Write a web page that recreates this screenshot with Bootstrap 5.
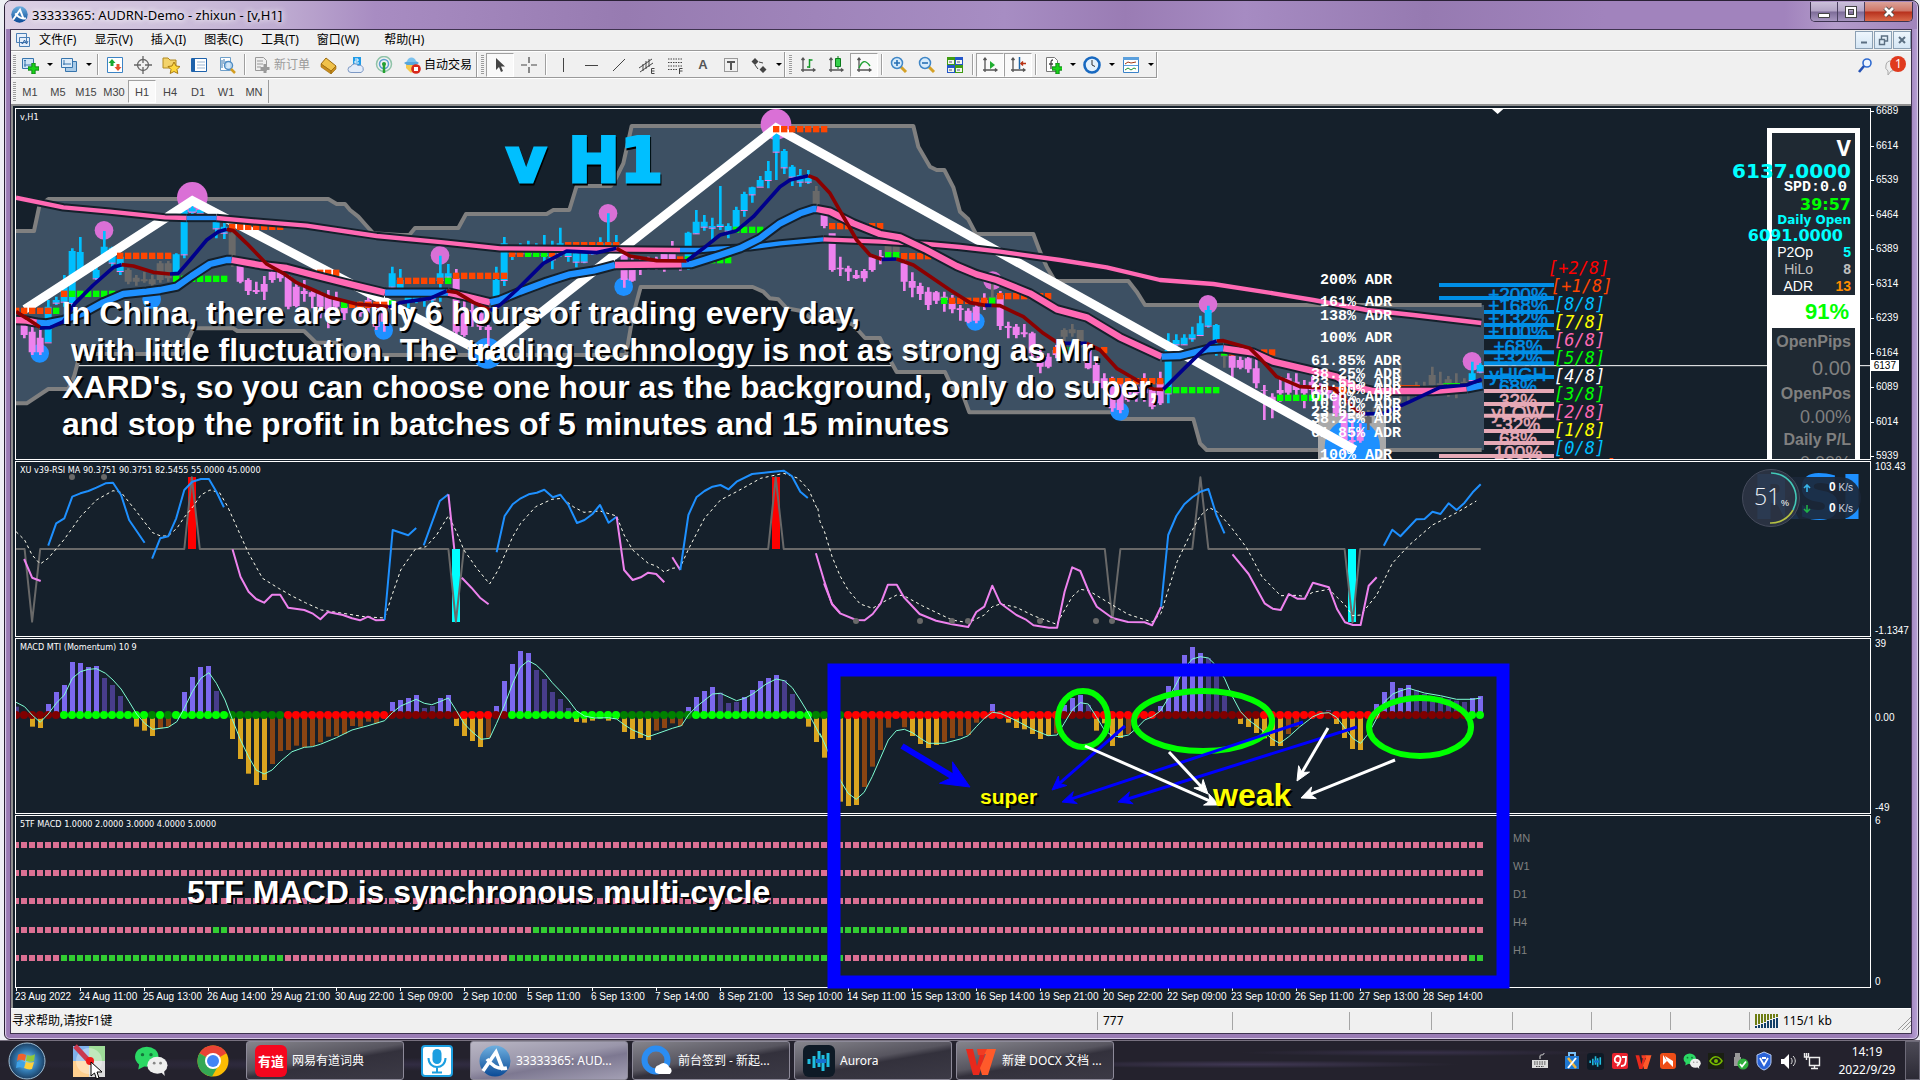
<!DOCTYPE html>
<html lang="zh-CN">
<head>
<meta charset="utf-8">
<meta name="viewport" content="width=device-width, initial-scale=1">
<title>33333365: AUDRN-Demo - zhixun - [v,H1]</title>
<link href="https://cdn.jsdelivr.net/npm/bootstrap@5.3.0/dist/css/bootstrap.min.css" rel="stylesheet">
<style>
:root{--ink:#15202b;--line:#fff}
body{background:#eef0f4;font-family:"Noto Sans","Noto Sans CJK SC",sans-serif;font-size:12px;line-height:16px;color:#000;overflow-x:hidden}
button{border:0;background:none;padding:0;color:inherit;font:inherit}
.app-window{margin:0 1px 0 4px;border:1px solid #2a2136;border-radius:7px 7px 6px 6px;padding:0 6px 5px 5px;
 background:linear-gradient(90deg,#b7a2cd 0,#9a7cb5 2px,#9a7cb5 99.5%,#b9a3d8);box-shadow:inset 0 0 0 1px #d8cbe6}
.caption-bar{height:28px;margin:0 -5px;padding-left:6px;padding-top:1px;border-radius:6px 6px 0 0;
 background:linear-gradient(90deg,#dcd0e4 0,#cdbfdb 170px,#c0add2 270px,#a88cc2 370px,#977bb1 620px,#a78dc3 1000px,#9a7cb4 1120px,#a68bc2 1240px,#967ab1 1420px,#a183bd 1600px,#a183bd 1780px,#b49ccb 1830px,#a185bc)}
.caption-text{font-size:13px;line-height:26px;text-shadow:0 0 6px #fff,0 0 6px #fff}
.win-ctl{height:20px;border:1px solid #3d3450;border-top:0;border-radius:0 0 5px 5px;overflow:hidden;margin-right:4px}
.win-ctl button{width:27px;background:linear-gradient(#cbc0da 0,#b3a4c6 48%,#7d6c98 52%,#a796c0);border-right:1px solid #4a4060}
.win-ctl button:last-child{width:47px;border:0;background:linear-gradient(#dba299 0,#cf7566 48%,#b7301c 52%,#d9694a)}
.client{border:1px solid #3f3350;background:#f0f0f0}
.menu-row{height:22px;border-bottom:1px solid #fff;box-shadow:inset 0 -1px #9a9a9a;padding-bottom:1px}
.menu-row a{color:#000;text-decoration:none;padding:0 9px;line-height:20px}
.mdi button{width:18px;height:18px;border:1px solid #8ba0b4;background:linear-gradient(#eef6fd,#d5e6f5);margin-left:1px}
.tool-row{height:27px}
.time-row{height:25px}
.tool-set{border-right:1px solid #9a9a9a;border-bottom:1px solid #9a9a9a;box-shadow:1px 1px #fff;height:26px}
.grip-bar{width:3px;height:19px;margin:0 2px;background:repeating-linear-gradient(#9b9b9b 0 1px,#f6f6f6 1px 2px)}
.tool{width:28px;height:24px}
.tool svg,.tool-text svg{width:18px;height:18px}
.tool.pressed,.tf.pressed{background:#f9f9f9;border:1px solid #a0a0a0;border-right-color:#fff;border-bottom-color:#fff}
.tool-text{height:24px;padding:0 4px 0 5px;gap:3px}
.caret-btn{width:11px;height:24px}
.caret-btn::before{content:"";display:block;margin:auto;width:5px;border:3px solid transparent;border-top-color:#000;border-bottom:0}
.rule{width:1px;height:21px;background:#9f9f9f;box-shadow:1px 0 #fff;margin:0 3px}
.tf{width:28px;height:23px;font:11px "Liberation Sans",sans-serif;color:#444}
.chart-frame{position:relative;border:solid #8f8f8f;border-width:2px 0 0 2px;padding:2px 0 0 2px;background:var(--ink);color:#fff;font:10px/12px "Liberation Sans",sans-serif}
.pane{display:flex;margin-bottom:1px}
.plot{flex:1 1 0;min-width:0;border:1px solid var(--line);position:relative;overflow:hidden}
.plot>svg{display:block;width:100%}
.plot-name{position:absolute;left:4px;top:2px;font:9px/12px "DejaVu Sans Condensed","Liberation Sans",sans-serif}
.scale{width:40px;flex:none;padding-left:5px;position:relative;display:flex;flex-direction:column;justify-content:space-between}
.scale span{position:relative}
.scale.price{margin:-3px 0 -2px}
.scale.price span::before{content:"";position:absolute;left:-5px;top:6px;width:3px;height:1px;background:#fff}
.price-tag{position:absolute;right:12px;top:255px;background:#fff;color:#000;line-height:11px;padding:0 3px}
.dates{height:20px;display:flex;padding-top:3px}
.dates span{width:64px;flex:none;white-space:nowrap;position:relative}
.dates span::before{content:"";position:absolute;left:1px;top:-4px;width:1px;height:4px;background:#fff}
.overlay{position:absolute;left:0;top:0;width:100%;height:100%;pointer-events:none}
.info{position:absolute;right:10px;top:19px;width:93px;height:340px;border:5px solid #fff;background:#1f2933;text-align:right;white-space:nowrap;padding:4px 4px 0 0}
.info>div{display:flex;justify-content:flex-end}
.wide{font-family:"DejaVu Sans",sans-serif;font-weight:700;color:#0ff}
.mono{font-family:"Liberation Mono",monospace;font-weight:700}
.info .pct{background:#fff;color:#0f0;font-size:22px;font-weight:700;line-height:33px;height:33px;margin-right:-4px;padding-right:6px}
.info .dim{color:#808080}
.speed{position:absolute;right:9px;top:7px}
.dial{width:58px;height:58px;z-index:1}
.rates{height:42px;width:76px;margin-left:-15px;border-radius:0 21px 21px 0;background:#1c2738e8;padding-left:18px;padding-right:8px;color:#cfd6e0}
.rates div{height:21px;line-height:21px;font-size:10px}
.rates b{font-size:12px;color:#fff}
.status{height:25px;border-top:1px solid #fff;line-height:24px}
.status>div{padding-left:1px}
.status span{border-left:1px solid #a5a5a5;height:18px;line-height:18px;margin-top:3px;padding-left:5px;flex:none}
.taskbar{height:40px;border-top:1px solid #77717f;color:#fff;font-size:12px;
 background:radial-gradient(ellipse at 65% 60%,#54476f99,transparent 12%),radial-gradient(ellipse at 74% 30%,#4b3f6680,transparent 9%),radial-gradient(ellipse at 20% 60%,#40385a80,transparent 20%),#24222d}
.task{width:158px;height:39px;border:1px solid #8d8a99;border-radius:3px;padding-left:8px;gap:5px;margin-right:4px;background:linear-gradient(170deg,#85848c,#57555f 45%,#33313c 55%,#3c3a46);color:#fff;text-align:left;white-space:nowrap}
.task.active{background:linear-gradient(170deg,#b9b6c4,#9a96aa 45%,#7d7891 60%,#a39fb4)}
.task svg{width:32px;height:32px;flex:none}
.quick{height:39px}
.quick svg{display:block}
.tray svg{width:18px;height:20px;display:block}
.tray{gap:6px}
.clock{width:60px;text-align:center;line-height:18px}
.desk-btn{width:15px;height:39px;border:1px solid #6d6a78;background:linear-gradient(#4c4a56,#2c2a35)}
</style>
<script src="https://cdn.jsdelivr.net/npm/bootstrap@5.3.0/dist/js/bootstrap.bundle.min.js"></script>
</head>
<body class="d-flex flex-column min-vh-100">
<svg width="0" height="0" class="position-absolute" aria-hidden="true">
<defs>
<linearGradient id="gLogo" x2="0" y2="1"><stop stop-color="#6fb0e0"/><stop offset="1" stop-color="#0a4a96"/></linearGradient>
<radialGradient id="gOrb"><stop stop-color="#8fd4f4"/><stop offset=".6" stop-color="#3177ae"/><stop offset="1" stop-color="#1c3f63"/></radialGradient>
<symbol id="plus" viewBox="0 0 10 10"><path d="M3.500 0h3v3.500H10v3H6.500V10h-3V6.500H0v-3h3.500z" fill="#19d219" stroke="#0a7a12" stroke-width=".8"/></symbol>
<symbol id="logo" viewBox="0 0 32 32"><circle cx="16" cy="16" r="15.500" fill="url(#gLogo)"/><path d="M4 26 17 7l7 18M8 14c6 8 12 11 20 9" fill="none" stroke="#fff" stroke-width="3.600"/></symbol>
<symbol id="axes" viewBox="0 0 18 18"><path d="M4 2v14M2 14h14M2.500 4 4 2l1.500 2M14 12.500l2 1.500-2 1.500" fill="none" stroke="#555" stroke-width="1.300"/></symbol>
<symbol id="wechat" viewBox="0 0 32 32"><ellipse cx="12" cy="12" rx="11" ry="9.500" fill="#2bd864"/><path d="m5 18-1 6 6-3z" fill="#2bd864"/><ellipse cx="22" cy="20" rx="9.500" ry="8" fill="#eee"/><path d="m25 26 4 4-1-6z" fill="#eee"/><g fill="#14753a"><circle cx="8" cy="10" r="1.600"/><circle cx="16" cy="10" r="1.600"/></g><g fill="#888"><circle cx="19" cy="18" r="1.300"/><circle cx="25" cy="18" r="1.300"/></g></symbol>
<symbol id="wps" viewBox="0 0 32 32"><path d="M1 4h7l4 17 3-12h5l-6 21H8z" fill="#e8291c"/><path d="M20 4h11l-8 26h-6l-2-7 6-14h-3z" fill="#ff5a2a"/><path d="M12 4h10l-3 6h-6z" fill="#f03c22"/></symbol>
<symbol id="aurora" viewBox="0 0 32 32"><rect width="32" height="32" rx="6" fill="#0e1a26"/><path d="M6 14v5M11 11v12M16 6v16M20 10v16M25 8v14" stroke="#20bfe0" stroke-width="3"/><path d="M13 16h10" stroke="#1570d0" stroke-width="4"/></symbol>
</defs></svg>

<main class="app-window">
<header class="caption-bar d-flex align-items-start">
 <svg width="17" height="17" class="mt-1 me-1"><use href="#logo"/></svg>
 <div class="caption-text flex-grow-1">33333365: AUDRN-Demo - zhixun - [v,H1]</div>
 <div class="win-ctl d-flex">
  <button aria-label="最小化"><svg width="14" height="14"><path d="M1.500 8.500h11v4h-11z" fill="#fff" stroke="#444"/></svg></button>
  <button aria-label="最大化"><svg width="14" height="14"><path d="M3 3h8v8H3z" fill="none" stroke="#444" stroke-width="4"/><path d="M3 3h8v8H3z" fill="none" stroke="#fff" stroke-width="2"/></svg></button>
  <button aria-label="关闭"><svg width="14" height="14"><path d="m3 3 8 8m0-8-8 8" stroke="#444" stroke-width="4.500"/><path d="m3 3 8 8m0-8-8 8" stroke="#fff" stroke-width="2.800"/></svg></button>
 </div>
</header>
<div class="client">
<nav class="menu-row d-flex align-items-center">
 <svg width="16" height="16" class="ms-1"><path d="M1.500 1.500h10v9h-10zM4.500 5.500h10v9h-10z" fill="#e5effa" stroke="#4a7fb5"/><path d="m6 10 1.500 2 2-4 2 4 1.500-3" fill="none" stroke="#2c62a0"/></svg>
 <a href="#" class="ps-2">文件(F)</a><a href="#">显示(V)</a><a href="#">插入(I)</a><a href="#">图表(C)</a><a href="#">工具(T)</a><a href="#">窗口(W)</a><a href="#" class="ps-3">帮助(H)</a>
 <div class="mdi d-flex ms-auto">
  <button aria-label="最小化图表"><svg width="12" height="12" class="d-block mx-auto"><path d="M3 8.500h6" stroke="#5b6f82" stroke-width="2"/></svg></button>
  <button aria-label="还原图表"><svg width="12" height="12" class="d-block mx-auto"><path d="M4.500 5V2h6v5H8M2.500 5.500h5v5h-5z" fill="none" stroke="#5b6f82" stroke-width="1.400"/></svg></button>
  <button aria-label="关闭图表"><svg width="12" height="12" class="d-block mx-auto"><path d="m3 3 6 6m0-6-6 6" stroke="#5b6f82" stroke-width="2"/></svg></button>
 </div>
</nav>
<div class="tool-row d-flex align-items-start">
 <div class="tool-set d-flex align-items-center">
  <i class="grip-bar me-0"></i>
  <button class="tool" aria-label="新图表"><svg viewBox="0 0 18 18"><path d="M1.500 2.500h11v10h-11z" fill="#cfe4f7" stroke="#3775ad"/><path d="M4 4v7M3 5l1-1 1 1M3 9h8" fill="none" stroke="#3775ad"/><use href="#plus" x="7" y="7" width="11" height="11"/></svg></button><button class="caret-btn" aria-label="新图表选项"></button>
  <button class="tool" aria-label="配置文件"><svg viewBox="0 0 18 18"><path d="M5.500 5.500h11v10h-11z" fill="#a9cbe8" stroke="#3775ad"/><path d="M1.500 2.500h11v9h-11z" fill="#ddecf9" stroke="#3775ad"/><path d="M3 8h8M4 4v5" stroke="#3775ad"/></svg></button><button class="caret-btn" aria-label="配置文件选项"></button>
  <i class="rule"></i>
  <button class="tool" aria-label="市场报价"><svg viewBox="0 0 18 18"><path d="M1.500 1.500h15v15h-15z" fill="#fff" stroke="#3c83c4"/><path d="m6 3 3.500 4H7.500v3h-3V7H2.500z" fill="#18a832"/><path d="m12 15 3.500-4h-2V8h-3v3h-2z" fill="#e5502c"/></svg></button>
  <button class="tool" aria-label="数据窗口"><svg viewBox="0 0 18 18"><circle cx="9" cy="9" r="5.500" fill="none" stroke="#666" stroke-width="1.300"/><path d="M9 0v7M9 11v7M0 9h7M11 9h7" stroke="#666" stroke-width="1.300"/></svg></button>
  <button class="tool" aria-label="导航"><svg viewBox="0 0 18 18"><path d="M1 2h5l2 2h6v8H1z" fill="#f3d36b" stroke="#b28a21"/><path d="m12 6 2 4 4 .5-3 3 .8 4-3.800-2-3.800 2 .8-4-3-3 4-.5z" fill="#ffd83c" stroke="#a87a10"/></svg></button>
  <button class="tool" aria-label="终端"><svg viewBox="0 0 18 18"><path d="M1.500 2.500h15v13h-15z" fill="#fff" stroke="#1e62ab"/><path d="M2 3h3v12H2z" fill="#1e62ab"/><path d="M7 6h8M7 9h8M7 12h8" stroke="#9db7d2"/></svg></button>
  <button class="tool" aria-label="策略测试"><svg viewBox="0 0 18 18"><path d="M2.500 1.500h10v13h-10z" fill="#fff" stroke="#6e9fc9"/><path d="M4 4v8M6 3v5M8 5v6" stroke="#3775ad"/><circle cx="10.500" cy="9.500" r="4" fill="#c8e2f8cc" stroke="#4e8cc4" stroke-width="1.500"/><path d="m13 13 4 4" stroke="#d39d20" stroke-width="2.500"/></svg></button>
  <i class="rule"></i>
  <button class="tool-text d-flex align-items-center" style="color:#9a9a9a"><svg viewBox="0 0 18 18"><path d="M2.500 1.500h8l3 3v10h-11z" fill="#eee" stroke="#999"/><path d="M4 5h6M4 8h6M4 11h4" stroke="#999"/><path d="M12 8v9M7.500 12.500h9" stroke="#999" stroke-width="3"/></svg>新订单</button>
  <button class="tool" aria-label="编辑器"><svg viewBox="0 0 18 18"><path d="m7 2 10 8-5 5L2 8z" fill="#f0c24a" stroke="#9b6a0e"/><path d="M2 8v3l10 7v-3zM12 18l5-5v-3l-5 5z" fill="#c98d1c" stroke="#9b6a0e" stroke-width=".6"/></svg></button>
  <button class="tool" aria-label="云服务"><svg viewBox="0 0 18 18"><path d="M6 1h8v9H6z" fill="#1f9be8"/><path d="M8 3h3v2H8v2h4" fill="none" stroke="#fff"/><path d="M4 16.500a3 3 0 0 1 0-6 4 4 0 0 1 7-1 3.500 3.500 0 0 1 3 7z" fill="#e4ecf8" stroke="#7c98c4"/></svg></button>
  <button class="tool" aria-label="信号"><svg viewBox="0 0 18 18" fill="none"><circle cx="9" cy="8" r="7.500" stroke="#8fc3a8" stroke-width="1.500"/><circle cx="9" cy="8" r="4.500" stroke="#5d9fd0" stroke-width="1.500"/><path d="M9 7v10" stroke="#24a031" stroke-width="2.500"/><circle cx="9" cy="8" r="2" fill="#24a031"/></svg></button>
  <button class="tool-text d-flex align-items-center"><svg viewBox="0 0 18 18"><path d="M3 8h10v4l-5 5-5-5z" fill="#f5c94f"/><path d="M1 7c4-3 12-3 15 0l-3 2H4z" fill="#56a5dc"/><path d="M4 6c0-6 9-6 9 0z" fill="#7cc2ee"/><circle cx="13" cy="13" r="4.800" fill="#d8281b"/><path d="M11 11h4v4h-4z" fill="#fff"/></svg>自动交易</button>
 </div>
 <div class="tool-set d-flex align-items-center">
  <i class="grip-bar ms-1"></i>
  <button class="tool pressed" aria-label="光标"><svg viewBox="0 0 18 18"><path d="M5 2v12l3-3 2 5 2-1-2-4.500h4z" fill="#444"/></svg></button>
  <button class="tool" aria-label="十字准线"><svg viewBox="0 0 18 18"><path d="M10 1v6M10 11v6M2 9h6M12 9h6" stroke="#444" stroke-width="1.200"/></svg></button>
  <i class="rule"></i>
  <button class="tool" aria-label="垂直线"><svg viewBox="0 0 18 18"><path d="M9.500 2v14" stroke="#444"/></svg></button>
  <button class="tool" aria-label="水平线"><svg viewBox="0 0 18 18"><path d="M3 9.500h13" stroke="#444"/></svg></button>
  <button class="tool" aria-label="趋势线"><svg viewBox="0 0 18 18"><path d="M3 15 15 3" stroke="#444"/></svg></button>
  <button class="tool" aria-label="等距通道"><svg viewBox="0 0 18 18"><path d="M1 12 14 3M2 16 15 7M5 8v7M8 5v8M11 3v8" stroke="#444"/><path d="M16.500 12.500h-3v5h3M13.500 15h3" fill="none" stroke="#444"/></svg></button>
  <button class="tool" aria-label="斐波那契"><svg viewBox="0 0 18 18"><path d="M2 3h14M2 6.500h14M2 10h14M2 13.500h9" stroke="#444" stroke-dasharray="1.500 1"/><path d="M16.500 12.500h-3V18M13.500 15h3" fill="none" stroke="#444"/></svg></button>
  <button class="tool" aria-label="文字"><b style="color:#555;font:bold 13px 'Liberation Sans',sans-serif">A</b></button>
  <button class="tool" aria-label="文字标签"><svg viewBox="0 0 18 18"><path d="M2.500 2.500h13v13h-13z" fill="none" stroke="#444" stroke-dasharray="1 1"/><path d="M5 6h8M9 6v8" stroke="#555" stroke-width="2"/></svg></button>
  <button class="tool" aria-label="箭头"><svg viewBox="0 0 18 18"><path d="m5 2 3.500 3.500L5 9 1.500 5.500zM13 10l3.500 3.500L13 17l-3.500-3.500z" fill="#444"/><path d="m5 9 3 4M9 6l4 1" stroke="#444"/></svg></button><button class="caret-btn" aria-label="箭头选项"></button>
 </div>
 <div class="tool-set d-flex align-items-center">
  <i class="grip-bar ms-1"></i>
  <button class="tool" aria-label="柱状图"><svg viewBox="0 0 18 18"><use href="#axes"/><path d="M10.500 3v9M10.500 4h3M8 11h2.500" stroke="#159a28" stroke-width="1.500"/></svg></button>
  <button class="tool" aria-label="蜡烛图"><svg viewBox="0 0 18 18"><use href="#axes"/><path d="M11 0v13" stroke="#0b7a1b"/><path d="M8.500 2.500h5v8h-5z" fill="#35d04a" stroke="#0b7a1b"/></svg></button>
  <button class="tool pressed" aria-label="折线图"><svg viewBox="0 0 18 18"><use href="#axes"/><path d="M4 12c3-7 6-9 11-2" fill="none" stroke="#22a336" stroke-width="1.400"/></svg></button>
  <i class="rule"></i>
  <button class="tool" aria-label="放大"><svg viewBox="0 0 18 18"><path d="m10 10 6 6" stroke="#d5a126" stroke-width="3"/><circle cx="7" cy="7" r="5.500" fill="#d6ebfb" stroke="#3f86c6" stroke-width="1.500"/><path d="M4 7h6M7 4v6" stroke="#2770b4" stroke-width="1.600"/></svg></button>
  <button class="tool" aria-label="缩小"><svg viewBox="0 0 18 18"><path d="m10 10 6 6" stroke="#d5a126" stroke-width="3"/><circle cx="7" cy="7" r="5.500" fill="#d6ebfb" stroke="#3f86c6" stroke-width="1.500"/><path d="M4 7h6" stroke="#2770b4" stroke-width="1.600"/></svg></button>
  <button class="tool" aria-label="平铺窗口"><svg viewBox="0 0 18 18"><path d="M1 1h8v8H1zM9 9h8v8H9z" fill="#3f9c12"/><path d="M9 1h8v8H9zM1 9h8v8H1z" fill="#2356c9"/><path d="M2 4h6v4H2zM10 4h6v4h-6zM2 12h6v4H2zM10 12h6v4h-6z" fill="#f2f6ee"/><path d="M3 6h3M11 6h3M3 14h3M11 14h3" stroke="#557"/></svg></button>
  <i class="rule"></i>
  <button class="tool pressed" aria-label="自动滚动"><svg viewBox="0 0 18 18"><use href="#axes"/><path d="m9 5 5 4-5 4z" fill="#1fae31"/></svg></button>
  <button class="tool pressed" aria-label="图表平移"><svg viewBox="0 0 18 18"><use href="#axes"/><path d="M10.500 1v12" stroke="#1c66a8" stroke-width="1.500"/><path d="M17 7.500h-5m2-2-2 2 2 2" fill="none" stroke="#b83213" stroke-width="1.500"/></svg></button>
  <i class="rule"></i>
  <button class="tool" aria-label="技术指标"><svg viewBox="0 0 18 18"><path d="M2.500 1.500h8l3 3v11h-11z" fill="#fff" stroke="#777"/><path d="M9 4C7 4 7 5 7 7v6M5 8h4" fill="none" stroke="#444" stroke-width="1.300"/><use href="#plus" x="8" y="7" width="11" height="11"/></svg></button><button class="caret-btn" aria-label="技术指标选项"></button>
  <button class="tool" aria-label="时间周期"><svg viewBox="0 0 18 18"><circle cx="9" cy="9" r="7.500" fill="#e4f1fc" stroke="#1869c0" stroke-width="2.600"/><path d="M9 4v5l3 1.500" fill="none" stroke="#333"/></svg></button><button class="caret-btn" aria-label="时间周期选项"></button>
  <button class="tool" aria-label="模板"><svg viewBox="0 0 18 18"><path d="M1.500 1.500h15v15h-15z" fill="#fff" stroke="#3b83c8"/><path d="M1 1h16v3H1zM2 9h14v1H2z" fill="#5ba0dd"/><path d="m3 8 3-2 3 1 5-1" fill="none" stroke="#a33a14"/><path d="m3 14 3-2 3 2 3-2 2 1" fill="none" stroke="#1b9430"/></svg></button><button class="caret-btn" aria-label="模板选项"></button>
 </div>
 <div class="ms-auto d-flex align-items-center pe-1 pt-1">
  <button class="me-2" aria-label="搜索"><svg width="20" height="18"><circle cx="12" cy="6" r="4" fill="#eef5ff" stroke="#2f6bd0" stroke-width="1.600"/><path d="m9 9-5 6" stroke="#2452b5" stroke-width="2.600"/></svg></button>
  <button aria-label="消息"><svg width="24" height="20"><path d="M3 9a5 5 0 1 1 5 6l-3 4v-4a5 5 0 0 1-2-6" fill="#eee" stroke="#aaa"/><circle cx="15" cy="8" r="8" fill="#e03a1e"/><text x="12" y="12" font-size="12" fill="#fff">1</text></svg></button>
 </div>
</div>
<div class="time-row d-flex align-items-center">
 <div class="d-flex align-items-center" style="border-right:1px solid #9a9a9a">
 <i class="grip-bar me-0"></i>
 <button class="tf">M1</button><button class="tf">M5</button><button class="tf">M15</button><button class="tf">M30</button><button class="tf pressed">H1</button><button class="tf">H4</button><button class="tf">D1</button><button class="tf">W1</button><button class="tf">MN</button></div>
</div>

<section class="chart-frame">
 <div class="pane">
  <div class="plot"><svg id="price" height="350"></svg><div class="plot-name">v,H1</div>
   <div class="info">
    <div class="mono" style="font-size:24px;line-height:26px">V</div>
    <div class="wide" style="font-size:20px;line-height:16px">6137.0000</div>
    <div class="mono pe-1" style="font-size:15px;line-height:18px">SPD:0.0</div>
    <div class="wide" style="font-size:16px;line-height:16px;color:#0f0">39:57</div>
    <div class="wide" style="font-size:12px;line-height:15px">Daily Open</div>
    <div class="wide pe-2" style="font-size:16px;line-height:16px">6091.0000</div>
    <div style="font-size:14px;line-height:17px">P2Op<b class="text-end" style="color:#0ff;width:38px">5</b></div>
    <div style="font-size:14px;line-height:17px;color:#c0c0c0">HiLo<b class="text-end" style="width:38px">8</b></div>
    <div style="font-size:14px;line-height:17px">ADR<b class="text-end" style="color:#ff8c00;width:38px">13</b></div>
    <div class="pct">91%</div>
    <div class="dim fw-bold" style="font-size:16px;line-height:28px">OpenPips</div>
    <div class="dim" style="font-size:20px;line-height:24px">0.00</div>
    <div class="dim fw-bold" style="font-size:16px;line-height:28px">OpenPos</div>
    <div class="dim" style="font-size:18px;line-height:18px">0.00%</div>
    <div class="dim fw-bold" style="font-size:16px;line-height:28px">Daily P/L</div>
    <div class="dim" style="font-size:18px;line-height:18px">0.00%</div>
   </div>
  </div>
  <div class="scale price"><span>6689</span><span>6614</span><span>6539</span><span>6464</span><span>6389</span><span>6314</span><span>6239</span><span>6164</span><span>6089</span><span>6014</span><span>5939</span><div class="price-tag">6137</div></div>
 </div>
 <div class="pane">
  <div class="plot"><svg id="rsi" height="174"></svg><div class="plot-name">XU v39-RSI MA 90.3751 90.3751 82.5455 55.0000 45.0000</div>
   <div class="speed d-flex align-items-center">
    <svg class="dial position-relative" viewBox="0 0 58 58"><circle cx="29" cy="29" r="28.500" fill="#2c3444" fill-opacity=".93" stroke="#454b5c"/><path d="M29 4a25 25 0 0 1 22 37" fill="none" stroke="#43c9b8" stroke-width="1.600"/><path d="M51 41a25 25 0 0 1-23 13" fill="none" stroke="#b5c143" stroke-width="1.600"/><text x="12" y="36" font-size="23" fill="#eef2f7" font-family="Open Sans,sans-serif" font-weight="300">51</text><text x="39" y="37" font-size="9" fill="#fff">%</text></svg>
    <div class="rates">
     <div class="d-flex align-items-center"><svg width="8" height="8" aria-label="上传"><path d="M4 8V2M1 4l3-3 3 3" fill="none" stroke="#37b4ea" stroke-width="1.600"/></svg><span class="ms-auto"><b>0</b> K/s</span></div>
     <div class="d-flex align-items-center"><svg width="8" height="8" aria-label="下载"><path d="M4 0v6M1 4l3 3 3-3" fill="none" stroke="#1fb048" stroke-width="1.600"/></svg><span class="ms-auto"><b>0</b> K/s</span></div>
    </div>
   </div>
  </div>
  <div class="scale ps-1"><span>103.43</span><span>-1.1347</span></div>
 </div>
 <div class="pane">
  <div class="plot"><svg id="macd" height="174"></svg><div class="plot-name">MACD MTI (Momentum) 10 9</div></div>
  <div class="scale ps-1"><span>39</span><span class="mb-3">0.00</span><span>-49</span></div>
 </div>
 <div class="pane mb-0">
  <div class="plot"><svg id="tf" height="171"></svg><div class="plot-name">5TF MACD 1.0000 2.0000 3.0000 4.0000 5.0000</div></div>
  <div class="scale ps-1"><span>6</span><span>0</span></div>
 </div>
 <div class="dates" id="dates"></div>
 <svg class="overlay" id="notes"></svg>
</section>

<footer class="status d-flex">
 <div class="flex-grow-1">寻求帮助,请按F1键</div>
 <span style="width:135px">777</span><span style="width:117px"></span><span style="width:82px"></span><span style="width:81px"></span><span style="width:79px"></span><span style="width:79px"></span><span style="width:79px"></span>
 <span class="d-flex align-items-center" style="width:162px"><svg width="24" height="14" class="me-1"><path d="M1 0v11M4 0v10M7 0v9M10 0v8M13 0v6M16 0v5M19 0v4M22 0v3" stroke="#6d7d12" stroke-width="2"/><path d="M1 14v-2M4 14v-3M7 14v-4M10 14V9M13 14V7M16 14V6M19 14V5M22 14V4" stroke="#123f66" stroke-width="2"/></svg>115/1 kb
 <svg width="14" height="14" class="ms-auto align-self-end"><path d="M1 14 14 1M5 14l9-9M9 14l5-5" stroke="#999"/></svg></span>
</footer>
</div>
</main>

<nav class="taskbar d-flex align-items-center mt-auto" aria-label="任务栏">
 <button class="quick ps-2" aria-label="开始"><svg width="38" height="38"><circle cx="19" cy="19" r="18" fill="url(#gOrb)" stroke="#9fbfd6"/><path d="M10 13c3-2 5-1 8 0l-1 6c-3-1-5-2-8 0z" fill="#f0622c"/><path d="M19 13c3 1 6 1 8-1l-1 7c-3 1-5 1-8 0z" fill="#8fc93a"/><path d="M9 20c3-1 5-1 8 0l-1 6c-3-1-5-1-8 0z" fill="#3fa2e8"/><path d="M18 20c3 1 5 1 8 0l-2 7c-3 1-5 0-8-1z" fill="#ffd03b"/></svg></button>
 <button class="quick" style="padding-left:27px" aria-label="地图"><svg width="36" height="38"><path d="M0 4h16v15H0z" fill="#7fb2ec"/><path d="M16 4h16v15H16z" fill="#9edc98"/><path d="M0 19h16v16H0z" fill="#ffcf8f"/><path d="M16 19h16v16H16z" fill="#ddd"/><circle cx="16" cy="19" r="13" fill="#fff" fill-opacity=".35"/><path d="m2 4 13 14" stroke="#c93a50" stroke-width="5"/><circle cx="17" cy="19" r="4" fill="#f01a1a"/><path d="M18 20v14l3.500-3 2 6 2.500-1-2-6h5z" fill="#fff" stroke="#000"/></svg></button>
 <button class="quick" style="padding-left:25px" aria-label="微信"><svg width="34" height="34"><use href="#wechat"/></svg></button>
 <button class="quick" style="padding-left:29px" aria-label="Chrome"><svg width="32" height="32"><circle cx="16" cy="16" r="15.500" fill="#fbbc04"/><path d="M16 16 2.500 8.300A15.500 15.500 0 0 1 29.500 8.300z" fill="#ea4335"/><path d="M16 16 2.500 8.300A15.500 15.500 0 0 0 15 31.500l7-12z" fill="#34a853"/><circle cx="16" cy="16" r="8" fill="#fff"/><circle cx="16" cy="16" r="6" fill="#4285f4"/></svg></button>
 <button class="task d-flex align-items-center" style="margin-left:17px;margin-right:17px"><svg viewBox="0 0 32 32"><rect width="32" height="32" rx="6" fill="#f5061e"/><text x="3" y="21" font-size="13" font-weight="700" fill="#fff">有道</text></svg>网易有道词典</button>
 <button class="quick" style="margin-right:17px" aria-label="录音"><svg width="32" height="34"><rect x="1" y="2" width="30" height="30" rx="3" fill="#fff" stroke="#1b9ee0" stroke-width="2"/><rect x="11.500" y="5" width="9" height="15" rx="4.500" fill="#1b9ee0"/><path d="M7.500 14c0 12 17 12 17 0M16 23v5M11 28.500h10" fill="none" stroke="#1b9ee0" stroke-width="2"/></svg></button>
 <button class="task active d-flex align-items-center"><svg><use href="#logo"/></svg>33333365: AUD...</button>
 <button class="task d-flex align-items-center"><svg viewBox="0 0 32 32"><circle cx="15" cy="15" r="11.500" fill="none" stroke="#2b8df2" stroke-width="6"/><path d="M15 28a5 5 0 0 1 3-8 6 6 0 0 1 10 2 4 4 0 0 1 1 7H18z" fill="#fff"/></svg>前台签到 - 新起...</button>
 <button class="task d-flex align-items-center"><svg><use href="#aurora"/></svg>Aurora</button>
 <button class="task d-flex align-items-center"><svg><use href="#wps"/></svg>新建 DOCX 文档 ...</button>
 <div class="tray ms-auto d-flex align-items-center me-3">
  <svg class="me-2" viewBox="0 0 18 20"><path d="M1 9h16v8H1z" fill="#ddd"/><path d="M3 11h12M3 13h12M5 15.500h8" stroke="#444" stroke-dasharray="1.500 1"/><path d="M9 8V5c0-2 4 0 4-3" fill="none" stroke="#ddd"/></svg>
  <svg viewBox="0 0 18 20"><path d="M2 5h14v13H2z" fill="#1f78d1"/><path d="M6 5V2h6v3" fill="none" stroke="#7cc0f5" stroke-width="2"/><path d="m5 7 8 10" stroke="#f4b53a" stroke-width="2.500"/><path d="m13 7-8 10" stroke="#fff" stroke-width="2"/></svg>
  <svg viewBox="0 0 18 20"><use href="#aurora" y="2" width="17" height="17"/></svg>
  <svg viewBox="0 0 18 20"><rect x="1" y="2" width="16" height="16" rx="2" fill="#e8212c"/><path d="M8 12c-6 0-5-7-1-7s3 7-1 10M11 6h4c0 9-2 9-5 9" fill="none" stroke="#fff" stroke-width="1.800"/></svg>
  <svg viewBox="0 0 18 20"><use href="#wps" y="2" width="17" height="17"/></svg>
  <svg viewBox="0 0 18 20"><rect x="1" y="2" width="16" height="16" rx="3" fill="#ee4d17"/><path d="M4 4v10l4-4zM6 5l8 5v6l-6-6z" fill="#fff"/></svg>
  <svg viewBox="0 0 18 20"><use href="#wechat" y="1" width="18" height="18"/></svg>
  <svg viewBox="0 0 18 20"><rect x="1" y="2" width="16" height="16" fill="#1a1f12"/><path d="M3 10c4-6 9-5 12 0-3 5-9 5-12 0z" fill="none" stroke="#76b900" stroke-width="1.500"/><circle cx="9" cy="10" r="2" fill="#76b900"/></svg>
  <svg viewBox="0 0 18 20"><path d="M4 2h5v4H4zM3 6h7v9H3z" fill="#999"/><circle cx="12" cy="13" r="5.500" fill="#2eaf3b"/><path d="m9 13 2 2.500 4-5" fill="none" stroke="#fff" stroke-width="1.800"/></svg>
  <svg viewBox="0 0 18 20"><path d="m9 1 7 3v7c0 4-4 7-7 8-3-1-7-4-7-8V4z" fill="#2a63d8" stroke="#b8cdf5"/><path d="m5 7 4 7 4-7M7 7h4" fill="none" stroke="#fff" stroke-width="1.800"/></svg>
  <svg viewBox="0 0 18 20"><path d="M2 8h3l5-5v15l-5-5H2z" fill="#fff"/><path d="M12 7c1.500 2 1.500 4 0 6M14 5c3 3 3 7 0 10" fill="none" stroke="#ddd"/></svg>
  <svg viewBox="0 0 18 20"><path d="M6.500 6.500h10v8h-10zM8 17.500h7M11.500 15v2M3.500 2v7M1.500 2v4h4V2" fill="none" stroke="#eee" stroke-width="1.400"/></svg>
 </div>
 <div class="clock me-2">14:19<br>2022/9/29</div>
 <button class="desk-btn" aria-label="显示桌面"></button>
</nav>

<script>
const put = (id, html) => document.getElementById(id).innerHTML = html;
const C = {o:'#ff4500', g:'#00ff00', b:'#00bfff', v:'#ee82ee', n:'#696969'};
const pl = (p, c, w, x = '') => `<polyline points="${p}" fill="none" stroke="${c}" stroke-width="${w}" stroke-linejoin="round" ${x}/>`;

/* Price pane. Geometry is in thirds of a pixel, bars are 24 units apart. */
const upper = '48,393 102,393 118,318 145,297 985,297 1010,312 1035,312 1050,330 1075,350 1100,378 1120,400 1200,405 1228,405 1245,384 1375,384 1398,342 1640,342 1660,330 1708,330 1730,258 1832,258 1845,240 1870,190 1895,78 2740,78 2755,140 2790,200 2810,210 2833,210 2860,262 2880,335 2905,358 2928,402 3100,402 3120,455 3140,500 3165,543 3385,543 3410,575 3435,615 4445,615';
const lower = '48,910 80,910 145,867 205,867 222,830 240,762 545,762 580,685 700,685 712,693 912,693 948,728 1020,728 1040,765 1878,765 1898,650 1922,561 2258,561 2290,575 2310,595 2335,598 2360,625 2400,632 2440,660 2540,665 2560,675 2595,714 2640,714 2670,780 2690,816 2835,816 2860,870 2885,875 2908,937 3345,937 3365,957 3580,957 3600,1030 3620,1050 4445,1050';
const P='#ff69b4', B='#1e90ff', N='#00008b', R='#8b0000';
const slow = [[P,'48,293 190,322 330,335 495,352 560,354'],[B,'560,354 650,354'],[P,'650,354 760,364 920,377 1130,408 1330,427 1500,445 2040,450'],[B,'2040,450 2100,450 2150,446 2250,442 2340,430 2470,418'],[P,'2470,418 2640,425 2780,432 2880,441 3000,455 3180,480 3320,502 3480,540 3640,552 3820,580 3940,600 4100,630 4240,645 4444,669']];
const mid = [[P,'48,660 80,662 110,668'],[B,'110,668 140,670 190,660 250,640 310,607 370,582 440,575 480,570 530,560 575,528 630,492 680,480 695,480'],[P,'695,480 780,495 860,504 940,525 1080,560 1155,578'],[B,'1155,578 1345,578'],[P,'1345,578 1400,590 1470,607'],[B,'1470,607 1500,600 1560,575 1640,545 1710,523 1780,512 1845,495'],[P,'1845,495 2045,493'],[B,'2045,493 2075,492 2160,465 2220,445 2280,415 2340,370 2400,340 2440,327 2450,327'],[P,'2450,327 2490,335 2560,370 2640,402 2700,412 2780,450 2870,498 2930,523 2990,540 3090,580 3170,628 3260,652 3360,712 3485,770'],[B,'3485,770 3540,768 3620,748 3670,745'],[P,'3670,745 3760,758 3820,785 3920,808 4010,830 4060,860 4120,873 4300,873 4400,865'],[B,'4400,865 4447,856']];
const fast = [[R,'48,635 80,655 120,682'],[N,'120,684 150,683 190,665 225,610 280,555 340,502 365,494'],[R,'365,494 400,498 460,517 510,522'],[N,'510,522 535,520 570,480 620,420 655,395 680,388'],[R,'680,388 700,392 740,430 800,492 850,520 890,548 940,570 990,592 1070,612 1165,620'],[N,'1165,622 1200,608 1290,595 1340,573'],[R,'1340,573 1370,577 1420,607 1470,630'],[N,'1470,632 1500,615 1550,570 1630,490 1700,453 1790,458 1850,445'],[R,'1850,445 1890,468 1970,482 2060,483'],[N,'2060,483 2110,445 2160,405 2210,392 2260,350 2340,260 2370,240 2425,227'],[R,'2425,227 2450,237 2490,280 2530,350 2570,420 2610,465 2645,478'],[N,'2645,478 2690,477'],[R,'2690,477 2740,495 2850,570 2910,608 2960,617'],[N,'2955,616 2975,616'],[R,'2975,616 3000,617 3070,650 3130,700 3175,730'],[N,'3175,730 3260,730'],[R,'3260,730 3300,750 3350,805 3410,840 3460,867 3490,868'],[N,'3490,868 3550,808 3630,730 3650,723'],[R,'3650,723 3670,722 3750,745 3780,775 3830,830 3900,860 4000,865 4030,890 4060,925 4090,942'],[N,'4090,942 4150,940 4230,905 4320,862 4400,855 4445,838']];
/* colour, x, wick top, wick bottom, body top, body bottom */
const candles = `v 73 670 715 675 705|v 97 680 765 695 757|v 121 690 765 713 757|b 145 600 727 620 727|b 169 590 615 600 608|b 193 525 620 560 605|b 217 445 620 453 610|b 241 411 515 456 510|b 289 500 540 510 535|b 313 393 465 440 465|b 337 440 500 443 488|b 361 465 525 470 513|n 385 505 553 510 545|n 409 525 557 533 545|n 433 515 548 538 544|n 457 525 560 538 553|n 481 483 548 490 540|n 505 483 545 490 535|b 529 460 520 463 520|b 553 325 475 330 463|b 577 315 350 325 335|b 601 325 340 330 340|b 649 360 415 360 385|b 673 365 417 380 398|n 697 395 500 400 470|v 721 495 550 498 545|v 745 535 585 540 573|v 769 545 582 570 576|v 793 528 600 552 575|v 817 505 548 515 540|v 841 500 545 515 535|v 865 525 628 530 620|v 889 550 622 560 618|v 913 540 605 573 582|v 937 567 625 577 590|v 961 575 655 580 620|v 985 570 685 590 650|v 1009 575 640 600 620|v 1033 600 660 620 640|v 1081 605 650 620 640|v 1105 585 640 600 620|v 1129 620 690 630 680|v 1153 625 695 640 665|b 1177 500 590 520 560|b 1201 507 570 540 565|b 1225 575 625 590 600|b 1249 580 610 590 600|b 1273 575 620 590 600|b 1297 570 610 585 598|b 1321 467 605 520 540|b 1345 492 545 520 530|v 1369 507 710 535 695|v 1393 600 710 640 705|v 1417 610 680 630 660|v 1441 620 690 640 680|v 1465 675 750 680 690|b 1489 500 600 540 595|b 1513 411 558 430 540|b 1537 440 480 450 460|b 1561 430 465 450 460|b 1585 422 460 450 460|b 1609 430 460 440 455|b 1633 405 490 450 465|b 1657 422 508 450 478|b 1681 383 470 430 460|b 1705 440 485 455 468|b 1729 450 502 460 485|b 1753 445 490 450 485|b 1777 440 465 445 460|b 1801 412 450 430 440|b 1825 340 450 430 440|b 1849 405 460 430 440|v 1873 450 563 460 540|v 1897 470 545 480 542|v 1921 470 525 480 500|v 1945 470 510 480 500|v 1969 470 510 480 500|v 1993 460 515 462 485|v 2017 423 490 460 485|v 2041 480 512 485 500|b 2065 395 510 398 480|b 2089 330 402 365 400|b 2113 345 392 365 380|b 2137 353 420 378 383|b 2161 258 390 373 378|b 2185 370 415 378 392|b 2209 320 395 330 385|b 2233 275 350 282 330|b 2257 260 308 262 283|b 2281 228 260 240 260|b 2305 183 265 213 240|b 2329 95 240 98 155|b 2353 147 222 153 202|b 2377 195 258 200 230|b 2401 207 260 225 245|b 2425 210 252 228 245|n 2449 258 320 273 315|v 2473 340 385 345 378|v 2497 400 515 400 510|v 2521 470 528 503 508|v 2545 497 543 505 515|v 2569 510 537 525 535|v 2593 507 545 513 535|v 2617 465 515 472 510|v 2641 450 493 468 475|n 2665 433 460 433 460|n 2689 433 460 433 460|v 2713 480 573 490 545|v 2737 517 592 543 563|v 2761 548 600 558 582|v 2785 562 630 575 615|v 2809 573 612 577 602|v 2833 575 635 590 600|v 2857 585 640 610 628|v 2881 615 662 625 630|v 2905 625 670 632 665|v 2929 615 670 620 662|v 2953 580 630 600 610|n 2977 545 600 590 600|v 3001 573 690 585 678|v 3025 665 715 678 684|v 3049 672 715 680 705|v 3073 672 712 697 703|v 3097 695 780 700 760|v 3121 750 820 760 800|v 3145 760 805 770 800|v 3169 735 775 750 765|n 3193 685 730 690 710|n 3217 672 710 688 700|n 3241 690 745 690 740|v 3265 735 808 745 805|v 3289 785 855 795 850|v 3313 820 870 835 865|v 3337 830 935 860 925|v 3361 850 940 870 930|v 3385 860 905 870 900|v 3409 850 905 860 880|v 3433 820 905 850 880|v 3457 865 928 870 920|v 3481 815 915 850 910|b 3505 700 910 750 880|b 3529 703 740 720 733|b 3553 703 735 713 733|b 3577 680 725 703 715|b 3601 647 708 670 705|b 3625 617 683 630 677|b 3649 672 767 675 720|n 3673 760 803 765 770|v 3697 765 833 768 803|v 3721 770 808 780 803|v 3745 770 818 775 808|v 3769 775 865 805 850|v 3793 855 960 870 872|v 3817 880 955 890 920|v 3841 830 905 870 880|v 3865 820 885 835 878|v 3889 820 890 845 870|v 3913 840 925 860 880|v 3937 830 900 845 870|v 3961 850 900 860 880|v 3985 860 895 865 880|v 4009 860 950 870 940|v 4033 930 1060 940 1020|v 4057 960 1040 1020 1026|v 4081 970 1028 990 1022|n 4105 930 990 950 970|n 4129 900 960 920 940|n 4201 790 900 880 885|n 4225 870 905 880 885|n 4249 845 890 870 880|n 4273 845 880 860 870|n 4297 800 855 825 855|n 4321 815 850 850 855|n 4345 828 890 838 850|n 4369 820 895 850 855|n 4393 835 850 845 850|b 4417 785 840 820 840|b 4441 790 820 795 815`.split('|').map(s => {
  const [c, ...d] = s.split(' '), [x, a, b, t, u] = d.map(Number);
  return `<path d="M${x-4} ${a}h8V${b}h-8zM${x-11} ${t}h21V${u}h-21z" fill="${C[c]}"/>` + (c === 'b' ? `<path d="M${x-11} ${u}h21v3h-21z" fill="#ee82ee"/>` : '');
}).join('');
const dots = `o 48 632 5|g 168 632 1|o 192 581 1|g 216 581 6|o 360 467 7|g 528 536 7|o 696 380 7|o 936 518 4|g 1032 614 1|o 1056 614 5|g 1176 610 1|o 1200 542 6|g 1344 542 1|o 1368 527 7|o 1536 461 2|g 1584 461 3|o 1656 461 1|o 1704 435 7|o 2040 478 1|g 2064 478 1|g 2112 480 4|g 2208 389 4|o 2328 87 7|o 2496 378 7|g 2664 465 2|o 2712 468 4|g 2832 602 1|o 2856 602 5|g 2976 602 1|o 3000 588 7|o 3168 750 1|g 3192 750 2|o 3312 750 1|o 3336 843 7|g 3504 870 7|g 3672 757 1|o 3696 757 1|o 3792 757 2|g 3840 893 6|o 4008 870 3`.split('|').map(s => {
  const [c, x, y, n] = s.split(' '); let r = '';
  for (let i = 0; i < n; i++) r += `<path d="M${+x + i*24 - 9} ${y - 9}h19v19h-19z" fill="${C[c]}"/>`;
  return r;
}).join('');
const balls = [['#da70d6',577,292,46],['#da70d6',312,391,28],['#da70d6',1320,466,28],['#da70d6',1824,340,28],['#da70d6',2328,73,46],['#da70d6',2978,542,28],['#da70d6',3624,613,28],['#da70d6',4416,784,28],[B,119,760,28],[B,455,598,28],[B,1151,691,28],[B,1462,760,46],[B,1871,560,28],[B,2926,664,28],[B,3359,934,28]].map(([c,x,y,r]) => `<circle cx="${x}" cy="${y}" r="${r}" fill="${c}"/>`).join('');
const band = (list, w) => list.map(([c, p]) => pl(p, '#15202b', w + 12)).join('') + list.map(([c, p]) => pl(p, c, w)).join('');
let g = `<g transform="translate(-16 -9) scale(.333333)"><path d="M48 797H5620" stroke="#fff" stroke-width="3"/>
<polygon points="${upper} 4452,615 4452,1050 ${lower.split(' ').reverse().join(' ')}" fill="#3d5063"/>
${pl(upper,'#808080',12)}${pl('1120,408 1200,414','#15202b',16)}${pl(lower,'#808080',12)}
<path d="M954 940h204v140H954z" transform="translate(3000)" fill="#a9a9a9"/><circle cx="4057" cy="1040" r="83" fill="${B}"/>${balls}${candles}
<polyline points="75,628 577,302 1462,765 2328,84 4065,1050" fill="none" stroke="#fff" stroke-width="27"/>
${dots}${band(slow,13)}${band(mid,19)}${fast.map(([c,p]) => pl(p,c,11)).join('')}
<path d="M4476 27h34l-17 15z" fill="#fff"/><path d="M4200 857h60" stroke="#ff4500" stroke-width="3"/><path d="M4330 851h50" stroke="#0f0" stroke-width="3"/></g><g transform="translate(-16 -109)">`;
[['+200%',585],['+168%',618],['+132%',658],['+100%',697],['+68%',742],['+32%',778],['yHIGH',825],['68%',862],['32%',902],['yLOW',940],['-32%',975],['68%',1018],['100%',1058]].forEach(([t,y],i) => g += `<text x="1518" y="${Math.round(y/3+106)}" text-anchor="middle" font-size="19" fill="${i<8?'#008ee6':'#e6a9b6'}" stroke="${i<8?'#008ee6':'#e6a9b6'}" stroke-width=".6">${t}</text>`);
[[1439,555],[1439,594],[1484,636],[1484,675],[1484,711],[1484,757],[1484,790],[1484,831],[1484,873],[1484,912],[1484,947],[1484,993],[1484,1029],[1439,1068]].forEach(([x,y],i) => g += `<path d="M${x} ${y/3+100}H1554" stroke="${i<8?'#008ee6':'#e6a9b6'}" stroke-width="4"/>`);
[['200%',538],['161%',604],['138%',646],['100%',712],['61.85%',781],['38.25%',820],['23.65%',845],['10.00%',868],['Open%',888],['10.00%',910],['23.65%',932],['38.25%',955],['61.85%',997],['100%',1062]].forEach(([t,y]) => g += `<text x="${t.length>4?1311:1320}" y="${Math.round(y/3+105)}" class="mono" font-size="15" fill="#fff">${t} ADR</text>`);
[['+2','#f00'],['+1','#ff4500'],['8','#00bfff'],['7','#ff0'],['6','#ff69b4'],['5','#0f0'],['4','#fff'],['3','#0f0'],['2','#ff69b4'],['1','#ff0'],['0','#00bfff'],['-1','#ff4500']].forEach(([t,c],i) => g += `<text x="${i<1?1548:i<2?1551:1554}" y="${274+i*18}" font-family="DejaVu Sans Mono,monospace" font-style="italic" font-size="17" fill="${c}">[${t}/8]</text>`);
put('price', g + '</g>');

/* Indicator panes: one x scale per half of the plot, y in thirds of a pixel. */
const mapPts = (s, a, k, top) => s.split(' ').map(q => { const [x, y] = q.split(',').map(Number); return `${(a + x/k).toFixed(1)},${(460 - top + y/3).toFixed(1)}`; }).join(' ');
const half = [[-16, 1.8667], [804, 2.24]];
const series = (i, s, c, w, top, x) => pl(mapPts(s, half[i][0], half[i][1], top), c, w, x);
const V = '#ee82ee', dash = 'stroke-dasharray="3 3"';
const rsi = [
[0,B,'90,257 105,190 120,175 135,110 150,100 165,93 180,83 197,70 211,68 226,105 241,180 270,248'],
[0,B,'284,296 299,235 314,229 329,175 344,90 359,65 375,57 390,57 404,95 418,142'],
[0,V,'434,268 449,350 464,395 478,417 493,428 508,404 523,404 538,443 568,450 583,460 598,478 612,456 640,465 657,475 672,481 687,470 702,481 718,480'],
[0,B,'718,480 733,210 762,226 777,204'],[0,B,'791,256 821,123 837,103'],[0,V,'837,103 848,268'],[0,V,'862,353 880,383 896,413 912,433'],
[0,B,'927,277 942,168 957,133 972,115 987,103 1002,98 1016,89 1032,112 1046,104 1061,135 1077,189 1091,180 1106,162 1120,135 1136,188 1151,170'],
[0,V,'1151,170 1165,330 1181,360 1196,352 1210,338 1225,342 1240,367'],[0,V,'1255,292 1270,330'],
[0,B,'1270,330 1285,165 1300,112 1315,93 1330,80 1345,75 1360,88 1375,65 1404,42 1434,37 1463,32 1478,48 1494,95 1508,114'],
[0,V,'1523,280 1538,360 1553,432 1568,458'],[0,V,'45,297 60,353 76,363'],
[1,V,'9,370 27,432 45,460 81,480 100,481 118,462 136,430 152,374 172,374 188,412 223,462 260,482 296,493 332,501 350,456 368,440 386,377 404,430 440,465 460,478 478,496 513,503 531,503 548,395 565,322 583,333 602,395 620,440 655,474 690,486 727,487 744,496 764,440'],
[1,B,'764,440 780,225 798,168 816,133 834,112 852,95 870,87 888,165 906,220'],
[1,V,'924,283 960,342 996,430 1014,446 1032,450 1050,402 1069,416 1086,416 1104,368 1122,375 1140,382 1158,447 1176,487 1194,495 1211,495 1229,377 1247,352'],
[1,B,'1263,257 1282,209 1300,229 1336,178 1354,177 1372,155 1390,162 1408,130 1426,150 1444,128 1462,97 1480,73']];
const T2 = 462;
const gray = '15,267 46,267 60,485 75,267 344,267 358,52 373,267 837,267 851,485 866,267 1434,267 1448,52 1463,267 1568,267';
const box = (x, y, w, h, c) => `<path d="M${x} ${y}h${w}v${h}h${-w}z" fill="${c}"/>`;
let r = `<text x="1737" y="56" font-family="DejaVu Sans,sans-serif" font-weight="700" font-size="59" fill="${B}" stroke="${B}" stroke-width="2">RSI</text>`;
[188,772].forEach(x => r += box(x-16, 15, 8, 72, '#f00'));
[452,1348].forEach(x => r += box(x-16, 87, 8, 73, '#0ff'));
r += series(0, gray, '#696969', 2, T2) + series(1, '0,267 638,267 655,480 673,267 834,267 852,52 870,267 1175,267 1193,487 1210,267 1480,267', '#696969', 2, T2);
r += series(0,'30,215 46,240 60,285 75,312 90,295 120,238 150,170 180,120 211,92 226,97 255,155 285,218 300,228 314,228 330,205 344,172 360,140 375,105 392,90 410,98 425,140 450,230 464,280 490,355 520,385 545,408 570,428 600,450 640,460 680,470 718,474 733,400 748,330 775,268 795,260 815,225 837,167 852,215 866,270 890,325 914,372 930,330 957,230 972,190 1000,140 1030,118 1050,115 1070,140 1090,157 1120,153 1151,168 1165,225 1181,270 1210,310 1225,318 1240,336 1255,325 1270,322 1285,268 1315,175 1345,120 1375,95 1420,55 1463,40 1490,55 1510,90 1525,145','#fffff0',1,T2,dash)
 + series(1,'-5,145 0,185 10,215 27,290 45,348 63,390 90,432 118,445 136,430 172,405 188,407 230,438 296,480 332,488 368,465 386,440 404,432 440,442 478,467 530,493 548,450 565,410 583,388 602,392 640,423 690,463 744,486 764,460 780,390 800,305 834,210 852,167 872,143 890,155 920,200 955,262 990,350 1032,407 1070,406 1086,410 1104,397 1140,388 1176,435 1193,467 1211,465 1247,405 1282,310 1320,255 1372,195 1426,158 1470,123','#fffff0',1,T2,dash);
rsi.forEach(([i,c,p]) => r += series(i,p,c,2,T2));
[[72,15],[104,15],[856,159],[920,159],[952,159],[968,159],[1040,159],[1096,159],[1112,159]].forEach(([x,y]) => r += `<circle cx="${x-16}" cy="${y}" r="3" fill="#696969"/>`);
put('rsi', r);

/* MACD histogram: first bar index, colour key, bar ends. */
const K = {P:'#7b68ee', D:'#483d8b', G:'#daa520', S:'#8b4513'};
const runs = `0 D 740|2 G 800 804|4 P 732 696 675 606 609 621 618|11 D 654 675 708|15 G 800 812 828|18 S 805 800|21 P 696 651 621 618|25 D 693|27 G 837 897 941 975 960|32 S 912 873 870 857 862 858 847 830 828 822 798 800 785 790|47 P 726 720 714 705|51 D 744 738|53 P 714 705|55 G 798 828 843 861|59 S 833|60 P 738 663 612 573 579|65 D 630 657 696 717 744|70 G 786 788 782 775 782 777 816 837 834 840|80 S 812 804 790 798|84 P 741 711 693 681|88 D 698 729 726|91 P 711 690 663 654 645|96 D 660 702|99 G 800 846 893 960 1025 1038 1035|106 S 981 920 870 803|111 S 802|112 G 828 852 864 855|116 S 845 834 828 825 788|122 P 732|124 G 788 804 808 822 837 827|130 S 820|131 P 735 714 705|134 D 735|135 G 812 790 858 834|139 S 822|143 P 738 678 648 585 561 579|149 D 594 645 708|153 G 792 801 819 835 858 858|159 S 822 800|164 D 750|165 G 792 834 867 870|170 P 732 696 666 684 675|175 D 690 702 708 711 717 722 726|182 P 714 708`;
const T3 = 639; let m = '';
runs.split('|').forEach(s => { const [k, c, ...v] = s.split(' '); v.forEach((y, i) => { const x = (+k + i)*8 - 2, e = 460 - T3 + y/3; m += e < 76 ? box(x, e, 5, 76 - e, K[c]) : box(x, 76, 5, e - 76, K[c]); }); });
const L='#00ff00', E='#008000', X='#ff0000', M='#800000';
[[0,5,M],[6,16,L],[17,17,E],[18,18,L],[19,19,E],[20,26,L],[27,33,E],[34,46,X],[47,55,M],[56,59,X],[60,61,M],[62,75,L],[76,84,E],[85,99,L],[100,103,E],[104,130,X],[131,134,M],[135,142,X],[143,155,M],[156,163,X],[164,164,M],[165,170,X],[171,181,M],[182,183,L]].forEach(([a,b,c]) => { for (; a <= b; a++) m += `<circle cx="${a*8}" cy="76" r="4" fill="${c}"/>`; });
m += series(0,'30,727 46,740 60,765 75,787 90,762 105,730 120,705 135,655 150,635 165,628 180,626 197,640 211,660 226,687 241,725 255,762 270,790 285,808 314,802 330,785 344,745 359,695 375,655 390,638 404,670 420,720 434,780 449,840 464,890 478,930 493,942 508,930 523,905 545,875 568,862 583,860 598,853 628,833 657,810 687,797 718,782 733,757 748,738 777,718 792,730 806,734 821,725 837,714 852,752 866,790 881,815 898,838 914,835 927,790 942,735 957,670 971,622 986,602 1001,615 1016,638 1031,668 1046,693 1061,720 1076,752 1091,768 1110,774 1136,773 1151,777 1166,795 1181,810 1210,830 1225,822 1255,805 1272,797 1285,765 1300,740 1330,702 1345,700 1375,722 1390,715 1405,702 1430,672 1449,657 1464,662 1479,683 1494,720 1509,760 1524,805 1533,832','#7fffd4',1,T3)
 + series(1,'0,820 15,865 45,960 63,1000 81,1018 99,997 117,950 135,895 153,840 171,812 189,808 207,818 225,835 243,850 278,850 314,837 332,827 350,800 368,775 386,757 404,760 440,782 476,808 511,827 531,825 547,790 565,750 583,728 601,732 619,770 637,810 655,828 673,830 691,825 709,805 727,780 745,770 763,752 780,715 798,672 816,625 834,597 852,590 870,594 884,612 906,655 924,710 942,755 960,780 985,805 1014,838 1030,850 1050,830 1075,800 1104,770 1122,760 1140,758 1157,772 1175,803 1193,835 1211,850 1229,820 1247,775 1265,725 1283,702 1301,692 1319,685 1354,699 1390,707 1426,718 1462,718 1480,714','#7fffd4',1,T3);
put('macd', m);

/* Five time frames, green where the trend is up. */
const up = [[],[],[],[[25,26],[65,111]],[[6,33],[62,103],[182,183]]];
let t = '';
up.forEach((spans, row) => { for (let k = 0; k < 184; k++) t += box(k*8 - 3, [26,54,82,111,139][row], 6, 6, spans.some(([a,b]) => k >= a && k <= b) ? '#32cd32' : '#db7093'); });
['MN','W1','D1','H4','H1'].forEach((n, i) => t += `<text x="1497" y="${26 + i*28}" font-size="11" fill="#808080">${n}</text>`);
put('tf', t);

put('dates', ['23 Aug 2022','24 Aug 11:00','25 Aug 13:00','26 Aug 14:00','29 Aug 21:00','30 Aug 22:00','1 Sep 09:00','2 Sep 10:00','5 Sep 11:00','6 Sep 13:00','7 Sep 14:00','8 Sep 21:00','13 Sep 10:00','14 Sep 11:00','15 Sep 13:00','16 Sep 14:00','19 Sep 21:00','20 Sep 22:00','22 Sep 09:00','23 Sep 10:00','26 Sep 11:00','27 Sep 13:00','28 Sep 14:00'].map(d => `<span>${d}</span>`).join(''));

/* Drawings and captions over all panes. */
const arrow = (x1, y1, x2, y2, c, w, h) => {
  const a = Math.atan2(y2 - y1, x2 - x1), p = (d, s) => `${(x2 - h*Math.cos(a) + d*s*Math.sin(a)).toFixed(1)} ${(y2 - h*Math.sin(a) - d*s*Math.cos(a)).toFixed(1)}`;
  return `<path d="M${x1} ${y1}L${x2 - h*.6*Math.cos(a)} ${y2 - h*.6*Math.sin(a)}" stroke="${c}" stroke-width="${w}"/><path d="M${x2} ${y2}L${p(1, h*.45)}L${(x2 - h*.7*Math.cos(a)).toFixed(1)} ${(y2 - h*.7*Math.sin(a)).toFixed(1)}L${p(-1, h*.45)}z" fill="${c}" stroke="${c}" stroke-linejoin="round"/>`;
};
const note = (x, y, s, size, c) => `<text x="${x}" y="${y}" font-size="${size}" font-weight="700" fill="${c}" style="text-shadow:2px 2px #000">${s}</text>`;
put('notes', `<g transform="translate(-13 -106)">
<text x="506" y="182" font-family="DejaVu Sans,sans-serif" font-weight="700" font-size="62" fill="#00bfff" stroke="#00bfff" stroke-width="3" style="filter:drop-shadow(1px 2px 0 #000)">v H1</text>
${note(62,324,'In China, there are only 6 hours of trading every day,',32,'#fff')}${note(71,361,'with little fluctuation. The trading technology is not as strong as Mr.',32,'#fff')}${note(62,398,"XARD's, so you can choose one hour as the background, only do super,",32,'#fff')}${note(62,435,'and stop the profit in batches of 5 minutes and 15 minutes',32,'#fff')}
${note(187,903,'5TF MACD is synchronous multi-cycle',32,'#fff')}
<rect x="834" y="670" width="669" height="312" fill="none" stroke="#00f" stroke-width="13"/>
<g fill="none" stroke="#0f0" stroke-width="6"><ellipse cx="1083" cy="719" rx="25" ry="28"/><ellipse cx="1203" cy="721" rx="69" ry="30"/><ellipse cx="1420" cy="727" rx="51" ry="29"/></g>
${arrow(902,746,970,787,'#00f',6,28)}${arrow(1125,726,1052,790,'#00f',3,14)}${arrow(1303,722,1062,802,'#00f',3,14)}${arrow(1357,727,1118,802,'#00f',3,14)}
${arrow(1085,746,1219,805,'#fff',3,14)}${arrow(1169,752,1208,794,'#fff',3,14)}${arrow(1328,728,1297,781,'#fff',3,14)}${arrow(1395,760,1301,798,'#fff',3,14)}
${note(980,804,'super',21,'#ff0')}${note(1213,806,'weak',32,'#ff0')}</g>`);
</script>
</body>
</html>
